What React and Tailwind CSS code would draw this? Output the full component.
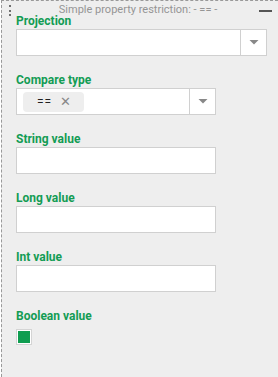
import React from "react";

function Arrow() {
  return (
    <svg width="10" height="5" viewBox="0 0 10 5">
      <path d="M0.5 0 L9.5 0 L5 4.5 Z" fill="#888" />
    </svg>
  );
}

function Label({ children }) {
  return (
    <div className="h-4 leading-4 text-[12px] font-bold text-[#139c54]">{children}</div>
  );
}

function TextInput() {
  return <div className="w-[200px] h-[27px] bg-white border border-[#d0d0d0]" />;
}

export default function App() {
  return (
    <div className="w-[278px] h-[377px] bg-white pl-px" style={{ fontFamily: "Roboto, 'Liberation Sans', sans-serif" }}>
      <div className="h-full bg-[#eeeeee] border-t border-l border-dashed border-[#999]">
        <div className="flex h-[12px] items-start">
          <div className="w-[13px] flex flex-col items-center pl-[3px] pt-[4px] gap-[2.5px]">
            <div className="w-[2px] h-[2px] bg-[#444] rounded-full" />
            <div className="w-[2px] h-[2px] bg-[#444] rounded-full" />
            <div className="w-[2px] h-[2px] bg-[#444] rounded-full" />
          </div>
          <div className="flex-1 text-center text-[11px] leading-[12px] text-[#959595] pt-[3px] pl-[2px] whitespace-nowrap">
            Simple property restriction: - == -
          </div>
          <div className="w-[19px] pt-[9px] pr-[6px]">
            <div className="w-[13px] h-[2px] bg-[#555]" />
          </div>
        </div>
        <div className="pl-[14px]">
          <Label>Projection</Label>
          <div className="w-[251px] h-[27px] bg-white border border-[#d0d0d0] flex">
            <div className="flex-1" />
            <div className="w-[26px] border-l border-[#d0d0d0] flex items-center justify-center">
              <Arrow />
            </div>
          </div>
          <div className="h-4" />
          <Label>Compare type</Label>
          <div className="w-[200px] h-[27px] bg-white border border-[#d0d0d0] flex">
            <div className="flex-1 flex items-center pl-[6px]">
              <div className="h-[20px] w-[61px] bg-[#eeeeee] rounded-[4px] flex items-center text-[12px] text-[#222]">
                <span className="ml-[14px] tracking-[1px]">==</span>
                <span className="ml-[8px] text-[#888] text-[13px] leading-none">✕</span>
              </div>
            </div>
            <div className="w-[26px] border-l border-[#d0d0d0] flex items-center justify-center">
              <Arrow />
            </div>
          </div>
          <div className="h-4" />
          <Label>String value</Label>
          <TextInput />
          <div className="h-4" />
          <Label>Long value</Label>
          <TextInput />
          <div className="h-4" />
          <Label>Int value</Label>
          <TextInput />
          <div className="h-4" />
          <Label>Boolean value</Label>
          <div className="mt-[5px] w-4 h-4 border border-[#d4d4d4] bg-white p-px">
            <div className="w-full h-full bg-[#0f9d50]" />
          </div>
        </div>
      </div>
    </div>
  );
}
